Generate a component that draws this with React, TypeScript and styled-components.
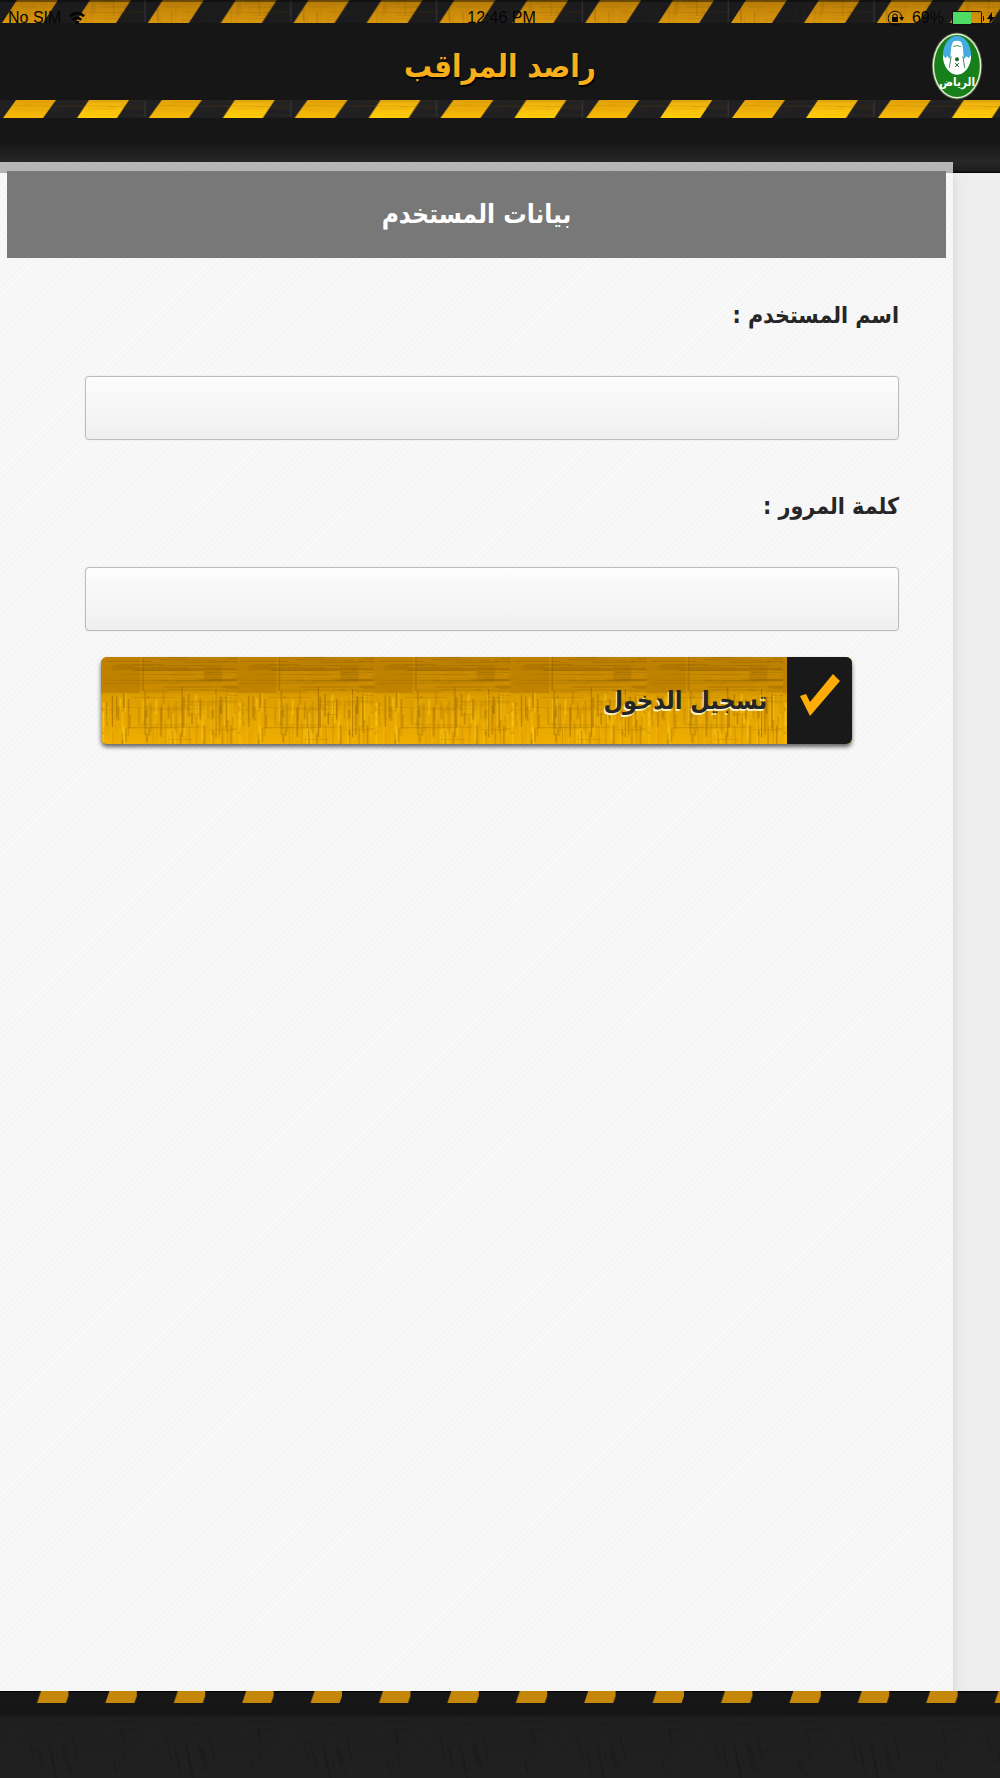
import React from "react";
import styled, { createGlobalStyle } from "styled-components";

const GlobalStyle = createGlobalStyle`
  *, *::before, *::after { box-sizing: border-box; }
  body { margin: 0; background: #ededed; }
`;

const arabic = `"DejaVu Sans Condensed", "DejaVu Sans", sans-serif`;

const Page = styled.div`
  min-height: 100vh;
  display: flex;
  flex-direction: column;
  background: #ededed;
  font-family: ${arabic};
`;

const Header = styled.header`
  position: relative;
  display: flex;
  flex-direction: column;
  height: 173px;
  background: linear-gradient(#151515 0, #181818 20px, #181818 118px, #121212 119px, #191919 145px, #272727 162px, #1c1c1c 171px, #000 173px);
`;

const Backdrop = styled.svg`
  position: absolute;
  inset: 0;
  width: 100%;
  height: 100%;
`;

const StatusBar = styled.div`
  position: relative;
  display: grid;
  grid-template-columns: 1fr auto 1fr;
  align-items: center;
  height: 32px;
  padding: 4px 5px 0 8px;
  font: 16px/28px "Liberation Sans Narrow", "Liberation Sans", sans-serif;
  color: #050505;
`;

const StatusGroup = styled.div<{ $end?: boolean }>`
  display: flex;
  align-items: center;
  justify-content: ${(p) => (p.$end ? "flex-end" : "flex-start")};
  gap: 8px;
`;

const TitleRow = styled.div`
  position: relative;
  display: grid;
  grid-template-columns: 1fr auto 1fr;
  align-items: start;
  height: 68px;
  padding: 0 16px;
`;

const AppTitle = styled.h1`
  grid-column: 2;
  margin: 0;
  font-size: 31px;
  line-height: 68px;
  font-weight: 700;
  color: #f9ae1c;
  text-shadow: 1px 2px 1px #000;
`;

const Logo = styled.svg`
  justify-self: end;
  width: 54px;
  height: 68px;
`;

const Panel = styled.main`
  position: relative;
  flex: 1;
  margin: -11px 0 0;
  margin-inline-start: 47px;
  padding: 9px 7px;
  background:
    repeating-linear-gradient(135deg, rgba(0, 0, 0, 0.014) 0 2px, transparent 2px 4px),
    rgba(255, 255, 255, 0.68);
  box-shadow: 3px 11px 10px -2px rgba(0, 0, 0, 0.1);
  clip-path: inset(0 -12px 0 0);
`;

const PanelTitle = styled.h2`
  margin: 0;
  height: 87px;
  line-height: 87px;
  text-align: center;
  font-size: 26px;
  font-weight: 700;
  color: #fff;
  background: #787878;
`;

const Form = styled.form`
  display: flex;
  flex-direction: column;
`;

const Field = styled.div`
  display: flex;
  flex-direction: column;
  height: 191px;
  padding: 28px 47px 0 78px;
`;

const Label = styled.label`
  height: 90px;
  line-height: 58px;
  font-size: 23px;
  font-weight: 700;
  color: #262626;
`;

const Input = styled.input`
  width: 100%;
  height: 64px;
  padding: 0 16px;
  border: 1px solid #bdbdbd;
  border-radius: 4px;
  background: linear-gradient(#fdfdfd, #efefef);
  box-shadow: 0 0 1px #bbb;
  font: 24px/32px ${arabic};
  color: #262626;
`;

const Submit = styled.button`
  position: relative;
  align-self: center;
  display: flex;
  align-items: center;
  width: 80%;
  height: 87px;
  margin-top: 17px;
  padding: 0;
  overflow: hidden;
  border: 0;
  border-radius: 6px;
  background: #d39400;
  box-shadow: 0 3px 4px rgba(0, 0, 0, 0.6);
  color: #262626;
  cursor: pointer;
`;

const SubmitIcon = styled.svg`
  position: relative;
  width: 65px;
  height: 87px;
  background: #191919;
`;

const SubmitText = styled.span`
  position: relative;
  padding: 0 20px;
  font: 700 25px/60px ${arabic};
  text-shadow: -1px 2px 0 #fff0c0;
`;

const Footer = styled.footer`
  position: relative;
  height: 87px;
  background: linear-gradient(#000 0, #171717 2px, #151515 22px, #1f1f1f 28px, #202020 100%);
`;

function noise(seed: number) {
  let s = seed;
  return () => {
    s = (s * 16807) % 2147483647;
    return s / 2147483647;
  };
}

function Threads({ seed, width, height, count, color, vertical, opacity }: {
  seed: number; width: number; height: number; count: number;
  color: string; vertical?: boolean; opacity: number;
}) {
  const next = noise(seed);
  return (
    <g fill={color}>
      {Array.from({ length: count }, (_, i) => {
        const length = 12 + next() * (vertical ? height : width) * 0.5;
        return (
          <rect
            key={i}
            x={next() * width}
            y={next() * height}
            width={vertical ? 1 + next() : length}
            height={vertical ? length : 1}
            opacity={opacity * next()}
          />
        );
      })}
    </g>
  );
}

function HeaderBackdrop() {
  return (
    <Backdrop aria-hidden="true">
      <defs>
        <linearGradient id="amberTop" x2="0" y2="1">
          <stop offset="0" stopColor="#b27908" />
          <stop offset="0.5" stopColor="#cb8a09" />
          <stop offset="1" stopColor="#d8960c" />
        </linearGradient>
        <linearGradient id="amberLow" x2="0" y2="1">
          <stop offset="0" stopColor="#e3a10a" />
          <stop offset="1" stopColor="#f8ba05" />
        </linearGradient>
        <linearGradient id="amberBright" x2="0" y2="1">
          <stop offset="0" stopColor="#f0b110" />
          <stop offset="1" stopColor="#ffce08" />
        </linearGradient>
        <pattern id="tape" width="145.8" height="173" patternUnits="userSpaceOnUse">
          <path d="M0 0h146v23H0z" fill="#1b1b1d" />
          <path d="M0 100h146v18H0z" fill="#202022" />
          <path d="M17 0H58L43 23H2z" fill="url(#amberTop)" />
          <path d="M90 0H131L116 23H75z" fill="url(#amberTop)" />
          <path d="M16 100H56L43 118H3z" fill="url(#amberLow)" />
          <path d="M89 100H129L117 118H77z" fill="url(#amberBright)" />
          <Threads seed={17} width={146} height={23} count={30} color="#3b2800" opacity={0.15} />
          <Threads seed={31} width={146} height={20} count={26} color="#3b2800" opacity={0.15} vertical />
          <g transform="translate(0 100)">
            <Threads seed={53} width={146} height={17} count={26} color="#7a4c00" opacity={0.15} />
          </g>
          <path d="M145 0v22M145 101v16" stroke="#38383c" />
          <path d="M0 0h146v2H0z" fill="#000" opacity="0.4" />
          <path d="M0 23h146v77H0zM0 118h146v26H0z" fill="#161616" />
        </pattern>
      </defs>
      <rect width="100%" height="144" fill="url(#tape)" />
    </Backdrop>
  );
}

function FooterBackdrop() {
  return (
    <Backdrop aria-hidden="true">
      <defs>
        <pattern id="footTape" width="68.4" height="87" patternUnits="userSpaceOnUse">
          <path d="M41 0H68.4V5L66 12H37z" fill="#c58709" />
        </pattern>
        <pattern id="cloth" width="137" height="87" patternUnits="userSpaceOnUse">
          <Threads seed={71} width={137} height={60} count={40} color="#000" opacity={0.14} />
          <g transform="translate(0 38) skewX(14)">
            <Threads seed={91} width={120} height={30} count={22} color="#000" opacity={0.18} vertical />
          </g>
        </pattern>
      </defs>
      <rect width="100%" height="12" fill="url(#footTape)" />
      <rect y="14" width="100%" height="73" fill="url(#cloth)" />
    </Backdrop>
  );
}

function SubmitBackdrop() {
  return (
    <Backdrop aria-hidden="true">
      <defs>
        <linearGradient id="weaveBase" x2="0" y2="1">
          <stop offset="0" stopColor="#c98b02" />
          <stop offset="0.35" stopColor="#cb8c00" />
          <stop offset="0.45" stopColor="#dd9e00" />
          <stop offset="1" stopColor="#f0ae00" />
        </linearGradient>
        <pattern id="weave" width="136.4" height="87" patternUnits="userSpaceOnUse">
          <path d="M0 0h137v87H0z" fill="url(#weaveBase)" />
          <path d="M0 0h39v36H0z" fill="#b87b00" opacity="0.65" />
          <path d="M42 0h95v14H42z" fill="#ad7400" opacity="0.4" />
          <path d="M103 10h18v13h-18z" fill="#a66d00" opacity="0.4" />
          <Threads seed={7} width={137} height={34} count={80} color="#7d5100" opacity={0.32} />
          <g transform="translate(0 34)">
            <Threads seed={43} width={137} height={44} count={80} color="#8a5700" opacity={0.5} vertical />
            <Threads seed={67} width={137} height={44} count={50} color="#ffcb12" opacity={0.7} vertical />
            <Threads seed={29} width={137} height={50} count={35} color="#9b6400" opacity={0.25} />
          </g>
          <path d="M42 0v34M44 34v44M81 30v50M115 32v48" stroke="#845300" opacity="0.55" />
        </pattern>
      </defs>
      <rect width="100%" height="87" fill="url(#weave)" />
    </Backdrop>
  );
}

function CityLogo() {
  return (
    <Logo viewBox="0 0 54 70" role="img" aria-label="الرياض">
      <defs>
        <clipPath id="sky"><ellipse cx="27" cy="24" rx="14.500" ry="20" /></clipPath>
      </defs>
      <ellipse cx="27" cy="35" rx="26" ry="34.500" fill="#8ba66c" opacity="0.55" />
      <ellipse cx="27" cy="35" rx="25" ry="33.500" fill="#e7f0d8" />
      <ellipse cx="27" cy="35" rx="23.500" ry="32" fill="#17801b" />
      <g clipPath="url(#sky)">
        <path d="M12 4h30v40H12z" fill="#45ace2" />
        <path d="M10 28l3-4 2 3 2-2 3 3 1-12 1-4 1-2q4-2 8 0l1 2 1 4 1 12 3-3 2 2 2-3 4 4v20H10z" fill="#fff" />
      </g>
      <path d="M23 15q4-2 8 0M21 25l-2 12M33 25l2 12" stroke="#3c8c4c" strokeWidth="1" fill="none" />
      <circle cx="27" cy="28" r="2" fill="#17652c" />
      <path d="M25 32l4 4M29 32l-4 4" stroke="#17652c" />
      <text x="27" y="56" direction="rtl" fill="#fff" fontFamily="DejaVu Sans Condensed, DejaVu Sans, sans-serif" fontWeight="700" fontSize="12" textAnchor="middle">الرياض</text>
    </Logo>
  );
}

export default function App() {
  return (
    <Page dir="rtl" lang="ar">
      <GlobalStyle />
      <Header dir="ltr">
        <HeaderBackdrop />
        <StatusBar>
          <StatusGroup>
            <span>No SIM</span>
            <svg width="16" height="15" viewBox="0 0 18 15" fill="none" stroke="#050505" strokeWidth="3" aria-hidden="true">
              <path d="M1 5Q9-2 17 5M4 9Q9 5 14 9" />
              <path d="M6 11Q9 9 12 11L9 15z" fill="#050505" stroke="none" />
            </svg>
          </StatusGroup>
          <span>12:46 PM</span>
          <StatusGroup $end>
            <svg width="16" height="16" viewBox="0 0 16 16" fill="none" stroke="#050505" aria-hidden="true">
              <path d="M11 14A7 7 0 1 1 14 7" />
              <path d="M11 7h5l-2 4z" fill="#050505" stroke="none" />
              <path d="M4 7h6v5H4z" fill="#050505" stroke="none" />
              <path d="M5 7V5q2-2 4 0v2" />
            </svg>
            <span>69%</span>
            <svg width="43" height="16" viewBox="0 0 43 16" aria-hidden="true">
              <rect x=".5" y="1.500" width="29" height="13" rx="1" fill="none" stroke="#111" />
              <path d="M1 2h18v12H1z" fill="#4fdc64" />
              <path d="M31 6h1v5h-1z" fill="#111" />
              <path d="M40 2L35 9h3l-1 5 6-7h-3z" fill="#050505" />
            </svg>
          </StatusGroup>
        </StatusBar>
        <TitleRow>
          <AppTitle dir="rtl">راصد المراقب</AppTitle>
          <CityLogo />
        </TitleRow>
      </Header>
      <Panel>
        <PanelTitle>بيانات المستخدم</PanelTitle>
        <Form onSubmit={(e) => e.preventDefault()}>
          <Field>
            <Label htmlFor="username">اسم المستخدم :</Label>
            <Input id="username" type="text" autoComplete="username" />
          </Field>
          <Field>
            <Label htmlFor="password">كلمة المرور :</Label>
            <Input id="password" type="password" autoComplete="current-password" />
          </Field>
          <Submit type="submit">
            <SubmitBackdrop />
            <SubmitIcon viewBox="0 0 65 87" aria-hidden="true">
              <path d="M13 39L19 37L23 45L46 17L53 24L23 59z" fill="#ffac08" />
            </SubmitIcon>
            <SubmitText>تسجيل الدخول</SubmitText>
          </Submit>
        </Form>
      </Panel>
      <Footer>
        <FooterBackdrop />
      </Footer>
    </Page>
  );
}
